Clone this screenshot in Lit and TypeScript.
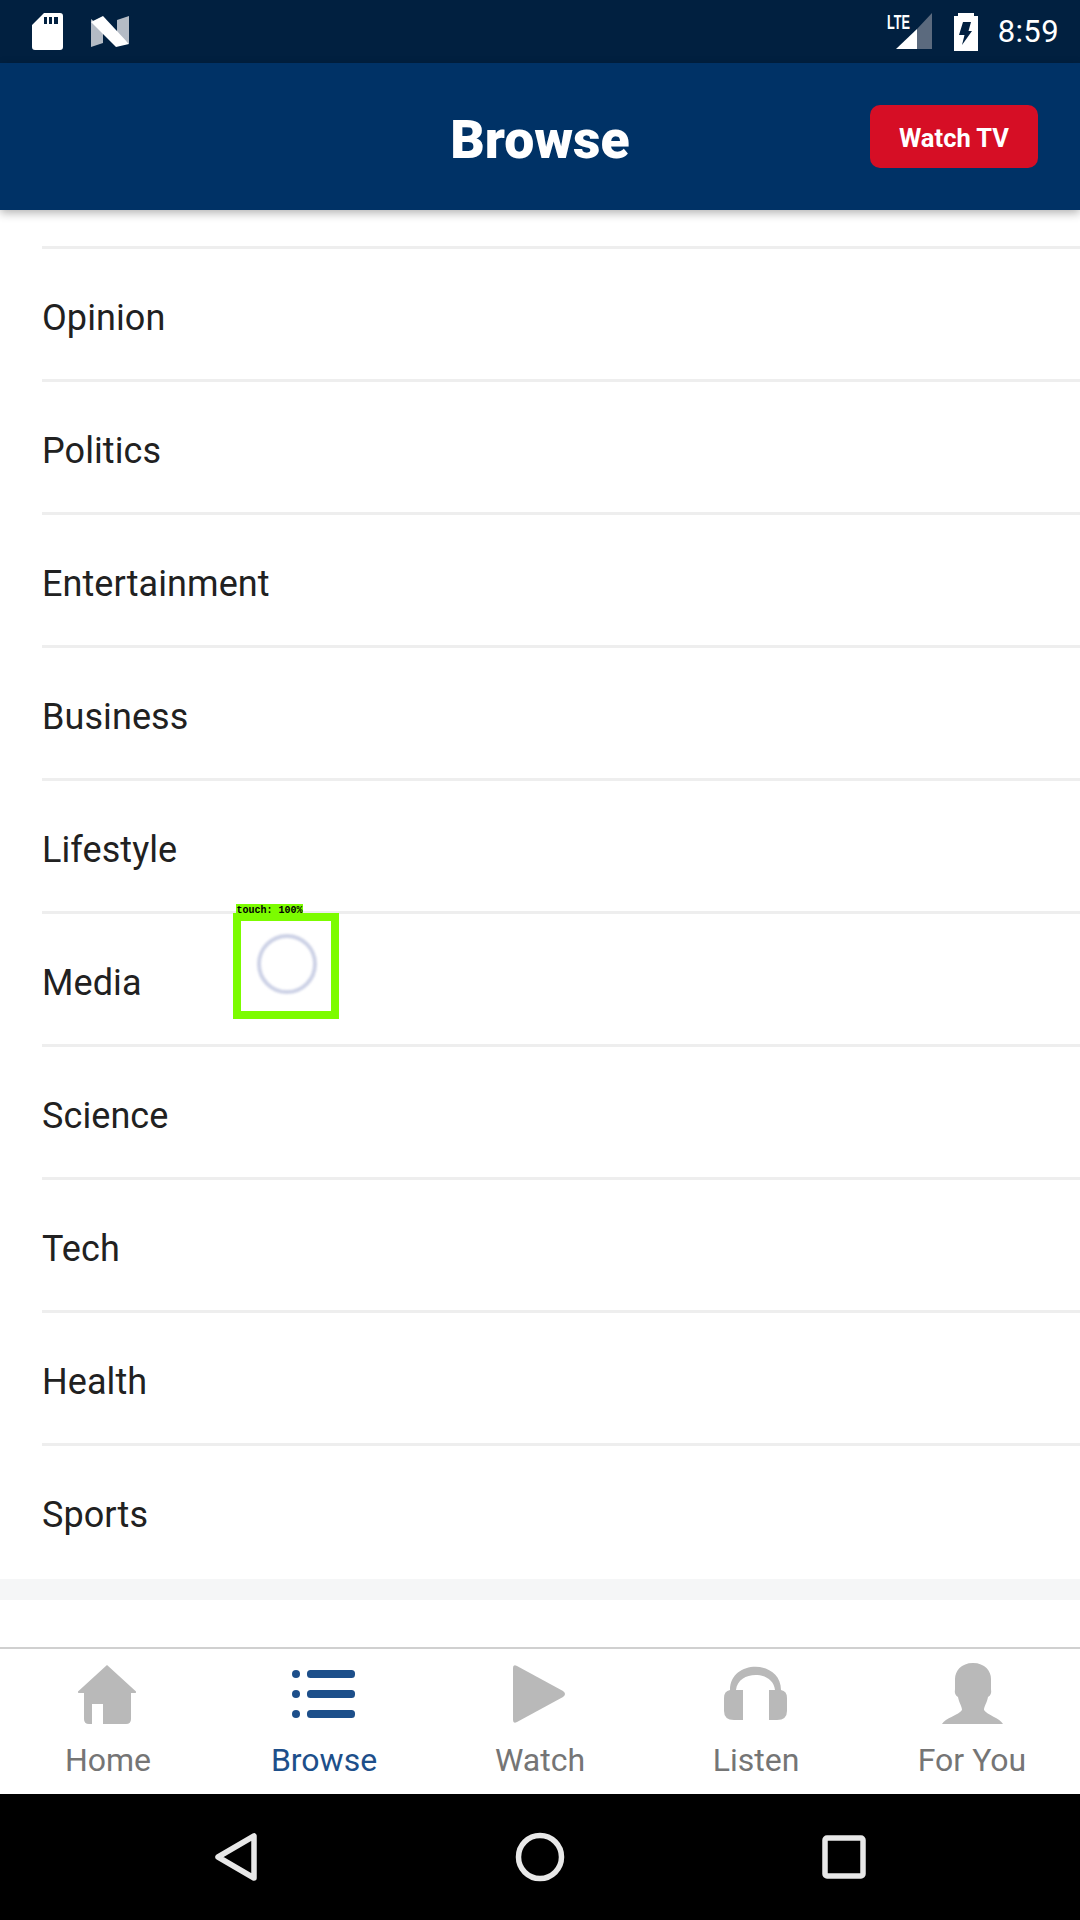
import { LitElement, html, css, svg } from 'lit';
import { customElement } from 'lit/decorators.js';

const SECTIONS = ['Opinion', 'Politics', 'Entertainment', 'Business', 'Lifestyle', 'Media', 'Science', 'Tech', 'Health', 'Sports'];

const TABS = [
  {
    label: 'Home',
    icon: svg`<path d="M31 0 L60 26.5 Q60.5 28 59 28 L55 28 L55 54 Q55 59 50 59 L27 59 L27 39 L16 39 L16 59 L13 59 Q8 59 8 54 L8 28 L3 28 Q1.5 28 2 26.5 Z"/>`,
  },
  {
    label: 'Browse',
    active: true,
    icon: svg`<circle cx="4" cy="9" r="4"/><rect x="15" y="5" width="48" height="8" rx="3.5"/>
      <circle cx="4" cy="29" r="4"/><rect x="15" y="25" width="48" height="8" rx="3.5"/>
      <circle cx="4" cy="49" r="4"/><rect x="15" y="45" width="48" height="8" rx="3.5"/>`,
  },
  {
    label: 'Watch',
    icon: svg`<path d="M5 3 Q5 -1 9 1 L55 26 Q59 29 55 32 L9 57 Q5 59 5 55 Z"/>`,
  },
  {
    label: 'Listen',
    icon: svg`<path d="M6 25 C6 -6 57 -6 57 25 L51 25 C49 5 14 5 12 25 Z"/>
      <path d="M6 25 L19 25 L19 55 L10 55 Q0 55 0 46 L0 33 Q0 26 6 25 Z"/>
      <path d="M45 25 L57 25 Q63 26 63 33 L63 46 Q63 55 53 55 L45 55 Z"/>`,
  },
  {
    label: 'For You',
    icon: svg`<path d="M33 -2 C45 -2 51 6 51 14 L51 24 Q52 30 48 32 C47 38 44 41 44 45 C47 50 60 53 63 59 L2 59 C5 53 19 50 22 45 C22 41 19 38 18 32 Q14 30 15 24 L15 14 C15 6 21 -2 33 -2 Z"/>`,
  },
];

@customElement('app-root')
export class AppRoot extends LitElement {
  static styles = css`
    :host {
      display: block;
      width: 1080px;
      height: 1920px;
      position: relative;
      overflow: hidden;
      background: #fff;
      font-family: Roboto, sans-serif;
    }
    .page {
      display: flex;
      flex-direction: column;
      height: 100%;
    }
    .status {
      height: 63px;
      flex: none;
      background: #012040;
      display: flex;
      align-items: center;
      padding: 0 21px 0 32px;
      color: #fff;
    }
    .status svg {
      display: block;
      flex: none;
      overflow: visible;
    }
    .n-logo {
      margin-left: 28px;
    }
    .status-right {
      margin-left: auto;
      display: flex;
      align-items: center;
    }
    .battery {
      margin-left: 22px;
    }
    .time {
      margin-left: 20px;
      font-size: 31px;
      letter-spacing: 0.4px;
    }
    .lte {
      font: bold 20px 'Liberation Sans Narrow', 'Liberation Sans', sans-serif;
    }
    .header {
      height: 147px;
      flex: none;
      background: #003266;
      display: grid;
      grid-template-columns: 1fr auto 1fr;
      align-items: center;
      padding: 0 42px;
      box-shadow: 0 3px 9px rgba(0, 0, 0, 0.3);
      position: relative;
      z-index: 1;
    }
    .title {
      grid-column: 2;
      color: #fff;
      font-size: 53.5px;
      font-weight: 900;
      padding-top: 6px;
    }
    .watch {
      grid-column: 3;
      justify-self: end;
      width: 168px;
      height: 61px;
      padding-top: 2px;
      border-radius: 10px;
      background: #d60e25;
      color: #fff;
      font-size: 25.5px;
      font-weight: 700;
      display: flex;
      align-items: center;
      justify-content: center;
    }
    .list {
      flex: none;
      padding: 36px 0 3px;
    }
    .row {
      margin-left: 42px;
      height: 123px;
      padding-top: 7px;
      border-top: 3px solid #eeeeee;
      display: flex;
      align-items: center;
      font-size: 36px;
      letter-spacing: 0.08px;
      color: #212121;
    }
    .strip {
      height: 21px;
      flex: none;
      background: #f5f6f7;
    }
    .spacer {
      flex: 1;
    }
    .tabs {
      height: 147px;
      box-sizing: border-box;
      flex: none;
      border-top: 2px solid #d0d0d0;
      display: grid;
      grid-template-columns: repeat(5, 1fr);
      background: #fff;
    }
    .tab {
      display: flex;
      flex-direction: column;
      align-items: center;
      padding-top: 16px;
      color: #757575;
      font-size: 32px;
    }
    .tab svg {
      display: block;
      fill: #b9b9b9;
      overflow: visible;
      margin-bottom: 16px;
    }
    .tab.active {
      color: #1d4f8a;
    }
    .tab.active svg {
      fill: #1d4f8a;
    }
    .sysnav {
      height: 126px;
      flex: none;
      background: #000;
      display: flex;
      align-items: center;
      justify-content: center;
      gap: 244px;
    }
    .sysnav svg {
      display: block;
      fill: none;
      stroke: #e8e8e8;
      stroke-width: 5.5;
      stroke-linejoin: round;
    }
    .touch {
      position: absolute;
      left: 233px;
      top: 913px;
      width: 106px;
      height: 106px;
      box-sizing: border-box;
      border: 8px solid #7cfc00;
    }
    .touch-label {
      position: absolute;
      left: -5px;
      top: -17px;
      width: 67px;
      height: 14px;
      background: #7cfc00;
      color: #000;
      font: bold 10px/14px 'Liberation Mono', monospace;
      white-space: pre;
      text-align: center;
    }
    .ripple {
      position: absolute;
      left: 16px;
      top: 13px;
      width: 60px;
      height: 60px;
      box-sizing: border-box;
      border-radius: 50%;
      border: 4px solid #cdd2e6;
      filter: blur(1px);
    }
  `;

  render() {
    return html`
      <div class="page">
        <div class="status">
          <svg width="31" height="37" viewBox="0 0 31 37">
            <path fill="#fff" fill-rule="evenodd" d="M12 0 L28 0 Q31 0 31 3 L31 34 Q31 37 28 37 L3 37 Q0 37 0 34 L0 12 Z M12 4 L12 11 L15 11 L15 4 Z M17 4 L17 11 L20 11 L20 4 Z M22 4 L22 11 L26 11 L26 4 Z"/>
          </svg>
          <svg class="n-logo" width="39" height="31" viewBox="0 0 39 31">
            <path fill="#b4bbc5" d="M0 3 L0 31 L12 27 L12 12 Z"/>
            <path fill="#b4bbc5" d="M38 0 L26 4 L26 18 L38 28 Z"/>
            <path fill="#fff" d="M0 6 L12 0 L38 28 L25 31 Z"/>
          </svg>
          <div class="status-right">
            <svg width="46" height="37" viewBox="0 0 46 37">
              <path fill="#fff" d="M10 36 L31 16 L31 36 Z"/>
              <path fill="#5b6a7e" d="M31 16 L46 0 L46 36 L31 36 Z"/>
              <text class="lte" x="1" y="15.5" fill="#fff" textLength="23" lengthAdjust="spacingAndGlyphs">LTE</text>
            </svg>
            <svg class="battery" width="24" height="38" viewBox="0 0 24 38">
              <path fill="#fff" fill-rule="evenodd" d="M4 0 L20 0 L20 3 L24 3 L24 38 L0 38 L0 3 L4 3 Z M9 9 L17 9 L14.5 18 L18 18 L8 32 L10.5 22 L5 22 Z"/>
            </svg>
            <span class="time">8:59</span>
          </div>
        </div>
        <div class="header">
          <div class="title">Browse</div>
          <div class="watch">Watch TV</div>
        </div>
        <div class="list">
          ${SECTIONS.map((s) => html`<div class="row">${s}</div>`)}
        </div>
        <div class="strip"></div>
        <div class="spacer"></div>
        <div class="tabs">
          ${TABS.map(
            (t) => html`
              <div class="tab ${t.active ? 'active' : ''}">
                <svg width="64" height="60" viewBox="0 0 64 60">${t.icon}</svg>
                <span>${t.label}</span>
              </div>
            `
          )}
        </div>
        <div class="sysnav">
          <svg width="60" height="60" viewBox="0 0 60 60"><path d="M48 9 L48 51 L12 30 Z"/></svg>
          <svg width="60" height="60" viewBox="0 0 60 60"><circle cx="30" cy="30" r="21.5"/></svg>
          <svg width="60" height="60" viewBox="0 0 60 60"><rect x="11" y="11" width="38" height="38" rx="2"/></svg>
        </div>
      </div>
      <div class="touch">
        <div class="touch-label">touch: 100%</div>
        <div class="ripple"></div>
      </div>
    `;
  }
}
